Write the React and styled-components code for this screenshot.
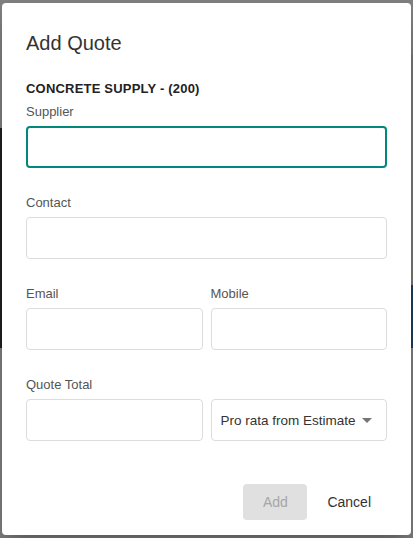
import styled, { createGlobalStyle } from "styled-components";

const GlobalStyle = createGlobalStyle`
  html, body {
    margin: 0;
    padding: 0;
    height: 100%;
  }
  body {
    font-family: "Liberation Sans", Arial, sans-serif;
    background: #7f7f7f;
  }
  * {
    box-sizing: border-box;
  }
`;

const Backdrop = styled.div`
  min-height: 538px;
  padding: 3px 2px;
  background:
    linear-gradient(to bottom, transparent 128px, #1f1f1f 128px, #1f1f1f 348px, transparent 348px) left top / 2px 100% no-repeat,
    linear-gradient(to bottom, transparent 55px, #767676 55px, #767676 285px, #1d3c5c 285px, #1d3c5c 348px, transparent 348px) right top / 2px 100% no-repeat,
    #7f7f7f;
`;

const Dialog = styled.div`
  width: 409px;
  height: 532px;
  background: #fff;
  border-radius: 4px;
  box-shadow: 0 11px 15px -7px rgba(0, 0, 0, 0.2), 0 24px 38px 3px rgba(0, 0, 0, 0.14);
  padding: 24px 24px 15px;
  display: flex;
  flex-direction: column;
`;

const Title = styled.h2`
  margin: 0;
  font-size: 20px;
  line-height: 32px;
  font-weight: 400;
  color: #333;
`;

const Heading = styled.div`
  margin-top: 21px;
  font-size: 13px;
  line-height: 18px;
  font-weight: 700;
  letter-spacing: 0.2px;
  color: #222;
`;

const Form = styled.div`
  display: flex;
  flex-direction: column;
  gap: 26px;
  margin-top: 5px;
`;

const Row = styled.div`
  display: grid;
  grid-template-columns: 1fr 1fr;
  gap: 8px;
  align-items: end;
`;

const Field = styled.div`
  display: flex;
  flex-direction: column;
`;

const Label = styled.label`
  font-size: 13px;
  line-height: 18px;
  color: #555;
  margin-bottom: 5px;
  min-height: 18px;
`;

const Input = styled.input`
  width: 100%;
  height: 42px;
  border-radius: 4px;
  border: ${(p) => (p.$focused ? "2px solid #00897b" : "1px solid #dcdcdc")};
  padding: 0 10px;
  font-family: inherit;
  font-size: 14px;
  color: #333;
  outline: none;
  background: #fff;
`;

const Select = styled.div`
  height: 42px;
  border: 1px solid #dcdcdc;
  border-radius: 4px;
  padding: 0 14px 0 9px;
  display: flex;
  align-items: center;
  justify-content: space-between;
  font-size: 13.5px;
  color: #333;
`;

const Caret = styled.span`
  width: 0;
  height: 0;
  border-left: 5px solid transparent;
  border-right: 5px solid transparent;
  border-top: 5px solid #757575;
  margin-top: 1px;
`;

const Actions = styled.div`
  margin-top: auto;
  display: flex;
  justify-content: flex-end;
  gap: 4px;
`;

const Button = styled.button`
  min-width: 64px;
  height: 36px;
  padding: 0 16px;
  border: none;
  border-radius: 4px;
  font-family: inherit;
  font-size: 14px;
  background: ${(p) => (p.$disabled ? "#e0e0e0" : "transparent")};
  color: ${(p) => (p.$disabled ? "#a6a6a6" : "#333")};
  cursor: ${(p) => (p.$disabled ? "default" : "pointer")};
`;

const TextField = ({ label, focused }) => (
  <Field>
    <Label>{label}</Label>
    <Input $focused={focused} />
  </Field>
);

export default function App() {
  return (
    <>
      <GlobalStyle />
      <Backdrop>
        <Dialog>
          <Title>Add Quote</Title>
          <Heading>CONCRETE SUPPLY - (200)</Heading>
          <Form>
            <TextField label="Supplier" focused />
            <TextField label="Contact" />
            <Row>
              <TextField label="Email" />
              <TextField label="Mobile" />
            </Row>
            <Row>
              <TextField label="Quote Total" />
              <Field>
                <Select>
                  Pro rata from Estimate
                  <Caret />
                </Select>
              </Field>
            </Row>
          </Form>
          <Actions>
            <Button $disabled>Add</Button>
            <Button>Cancel</Button>
          </Actions>
        </Dialog>
      </Backdrop>
    </>
  );
}
